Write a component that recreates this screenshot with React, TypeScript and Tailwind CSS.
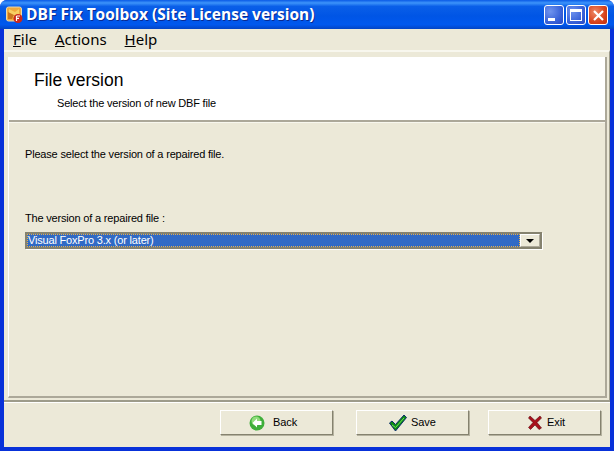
import React from "react";

const Icon = () => (
  <svg width="17" height="17" viewBox="0 0 17 17" className="shrink-0">
    <rect x="0.5" y="1" width="15" height="14" rx="2" fill="#f0a93c" stroke="#e8d9b0" />
    <path d="M3 3 L9 6 L13 3 L13 10 L3 12 Z" fill="#f7cf62" />
    <path d="M2 6 L8 9 L6 13 L2 13 Z" fill="#c9761f" />
    <circle cx="12" cy="12.5" r="4.5" fill="#c9281c" />
    <path d="M10.5 10 H14 M10.5 10 V15 M10.5 12.3 H13" stroke="#fff" strokeWidth="1.2" fill="none" />
  </svg>
);

const WinBtn = ({ red, children }: { red?: boolean; children: React.ReactNode }) => (
  <div
    className={
      "w-[20px] h-[20px] rounded-[3px] border border-white flex items-center justify-center " +
      (red
        ? "bg-[radial-gradient(circle_at_35%_35%,#ee8a68,#d8431c_60%,#c1300f)]"
        : "bg-[radial-gradient(circle_at_30%_30%,#6f93ee,#3a63d8_60%,#2748c4)]")
    }
  >
    {children}
  </div>
);

const Btn = ({ icon, label, cls }: { icon: React.ReactNode; label: string; cls: string }) => (
  <div className={"w-[113px] h-[25px] flex items-center border border-white border-r-[#85826f] border-b-[#85826f] shadow-[1px_1px_0_#b5b29f] text-[11px] tracking-[-0.1px] text-black " + cls}>
    {icon}
    <span>{label}</span>
  </div>
);

export default function App() {
  return (
    <div className="w-[614px] h-[451px] overflow-hidden bg-[#0831d9] flex flex-col font-['Liberation_Sans',Arial,sans-serif] rounded-t-[7px]">
      <div className="h-[29px] shrink-0 flex items-center pl-[6px] pr-[6px] bg-[linear-gradient(180deg,#0a5ae6_0%,#3d94fa_10%,#0a5fe8_22%,#0055e5_55%,#0058ee_85%,#0344c4_100%)]">
        <Icon />
        <span className="ml-[3px] mt-[1px] text-white font-bold text-[15.5px] font-['Open_Sans',sans-serif] [text-shadow:1px_1px_0_#0a2a90] whitespace-nowrap">
          DBF Fix Toolbox (Site License version)
        </span>
        <div className="ml-auto mt-[1px] flex gap-[2px]">
          <WinBtn>
            <div className="w-[7px] h-[3px] bg-white mt-[8px] -ml-[5px]" />
          </WinBtn>
          <WinBtn>
            <div className="w-[12px] h-[12px] border border-t-[3px] border-white" />
          </WinBtn>
          <WinBtn red>
            <svg width="11" height="11" viewBox="0 0 11 11">
              <path d="M1 1 L10 10 M10 1 L1 10" stroke="#fff" strokeWidth="2.2" />
            </svg>
          </WinBtn>
        </div>
      </div>

      <div className="flex-1 min-h-0 mx-[4px] mb-[4px] bg-[#ece9d8] flex flex-col">
        <div className="h-[21px] shrink-0 flex items-center gap-[18px] pl-[9px] text-[15px] text-black font-['Noto_Sans',sans-serif]">
          <span><u>F</u>ile</span>
          <span><u>A</u>ctions</span>
          <span><u>H</u>elp</span>
        </div>

        <div className="h-[352px] shrink-0 border-t-2 border-t-[#f8f7ee] pt-[5px] pb-[2px] pl-[4px] border-r border-r-[#9d9b8a] border-b-2 border-b-[#9d9b8a] shadow-[0_1px_0_#fff]">
          <div className="h-full border-l border-l-white border-r-2 border-r-[#aca899] border-b-2 border-b-[#aca899] flex flex-col mr-[2px]">
            <div className="h-[65px] shrink-0 bg-white border-b-2 border-b-[#aca899] shadow-[0_1px_0_#f8f7ee] flex flex-col pl-[25px] pt-[12px]">
              <div className="text-[17.5px] leading-[22px] text-black">File version</div>
              <div className="text-[11px] tracking-[-0.18px] leading-[14px] mt-[5px] ml-[23px] text-black whitespace-nowrap">Select the version of new DBF file</div>
            </div>
            <div className="flex-1 pl-[16px] pt-[25px] text-[11px] tracking-[-0.18px] text-black">
              <div className="leading-[14px]">Please select the version of a repaired file.</div>
              <div className="leading-[14px] mt-[50px]">The version of a repaired file :</div>
              <div className="mt-[7px] w-[513px] h-[13px] box-content border-2 border-[#85826f] shadow-[1px_1px_0_#fff] flex bg-white">
                <div className="flex-1 bg-[#316ac5] text-white leading-[13px] pl-[1px] outline-1 outline-dotted outline-[#e8b04a] -outline-offset-1 whitespace-nowrap">
                  Visual FoxPro 3.x (or later)
                </div>
                <div className="w-[20px] bg-[#ece9d8] border border-white border-r-[#aca899] border-b-[#aca899] flex items-center justify-center">
                  <div className="w-0 h-0 border-l-[4px] border-r-[4px] border-t-[4px] border-l-transparent border-r-transparent border-t-black" />
                </div>
              </div>
            </div>
          </div>
        </div>

        <div className="flex-1 flex items-start pt-[8px] pl-[216px]">
          <Btn
            cls="pl-[28px] gap-[8px]"
            label="Back"
            icon={
              <svg width="16" height="16" viewBox="0 0 16 16">
                <circle cx="8" cy="8" r="7.5" fill="#3fae3a" />
                <circle cx="7" cy="6" r="4.5" fill="#8fdc7a" />
                <path d="M8 3.5 L3.5 8 L8 12.5 V10 H12.5 V6 H8 Z" fill="#fff" />
              </svg>
            }
          />
          <div className="w-[23px]" />
          <Btn
            cls="pl-[32px] gap-[4px]"
            label="Save"
            icon={
              <svg width="18" height="18" viewBox="0 0 18 18">
                <path d="M0.5 9 L3 7 L6.5 10.5 L15 1 L17.5 3.5 L6.5 17 Z" fill="#0f8a14" stroke="#0b2a6e" strokeWidth="1" />
                <path d="M3 11 L6.5 13.5 L15 4" stroke="#6fe05f" strokeWidth="1" fill="none" />
              </svg>
            }
          />
          <div className="w-[19px]" />
          <Btn
            cls="pl-[39px] gap-[5px]"
            label="Exit"
            icon={
              <svg width="14" height="15" viewBox="0 0 14 15">
                <path d="M2 1 L7 5.5 L12 1 L13.5 3 L9 7.5 L13.5 13 L11 14.5 L7 10 L2.5 14.5 L0.5 12.5 L5 7.5 L0.5 3 Z" fill="#a8101a" stroke="#5e0a10" strokeWidth="0.6" />
              </svg>
            }
          />
        </div>
      </div>
    </div>
  );
}
